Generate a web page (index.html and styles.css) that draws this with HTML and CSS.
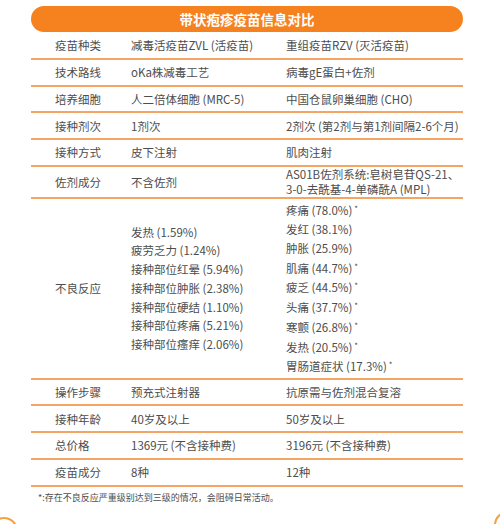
FILE: index.html
```html
<!DOCTYPE html>
<html lang="zh">
<head>
<meta charset="utf-8">
<link rel="stylesheet" href="styles.css">
</head>
<body>
<div class="page">
  <div class="card">
    <div class="title">带状疱疹疫苗信息对比</div>
    <div class="row first">
      <div class="label">疫苗种类</div>
      <div class="cell">减毒活疫苗ZVL (活疫苗)</div>
      <div class="cell">重组疫苗RZV (灭活疫苗)</div>
    </div>
    <div class="row">
      <div class="label">技术路线</div>
      <div class="cell">oKa株减毒工艺</div>
      <div class="cell">病毒gE蛋白+佐剂</div>
    </div>
    <div class="row">
      <div class="label">培养细胞</div>
      <div class="cell">人二倍体细胞 (MRC-5)</div>
      <div class="cell">中国仓鼠卵巢细胞 (CHO)</div>
    </div>
    <div class="row">
      <div class="label">接种剂次</div>
      <div class="cell">1剂次</div>
      <div class="cell">2剂次 (第2剂与第1剂间隔2-6个月)</div>
    </div>
    <div class="row">
      <div class="label">接种方式</div>
      <div class="cell">皮下注射</div>
      <div class="cell">肌肉注射</div>
    </div>
    <div class="row adj">
      <div class="label">佐剂成分</div>
      <div class="cell">不含佐剂</div>
      <div class="cell tight">AS01B佐剂系统:皂树皂苷QS-21、<br>3-0-去酰基-4-单磷酰A (MPL)</div>
    </div>
    <div class="row adverse">
      <div class="label">不良反应</div>
      <div class="cell list">
        <div>发热 (1.59%)</div>
        <div>疲劳乏力 (1.24%)</div>
        <div>接种部位红晕 (5.94%)</div>
        <div>接种部位肿胀 (2.38%)</div>
        <div>接种部位硬结 (1.10%)</div>
        <div>接种部位疼痛 (5.21%)</div>
        <div>接种部位瘙痒 (2.06%)</div>
      </div>
      <div class="cell list">
        <div>疼痛 (78.0%)<span class="star">*</span></div>
        <div>发红 (38.1%)</div>
        <div>肿胀 (25.9%)</div>
        <div>肌痛 (44.7%)<span class="star">*</span></div>
        <div>疲乏 (44.5%)<span class="star">*</span></div>
        <div>头痛 (37.7%)<span class="star">*</span></div>
        <div>寒颤 (26.8%)<span class="star">*</span></div>
        <div>发热 (20.5%)<span class="star">*</span></div>
        <div>胃肠道症状 (17.3%)<span class="star">*</span></div>
      </div>
    </div>
    <div class="row">
      <div class="label">操作步骤</div>
      <div class="cell">预充式注射器</div>
      <div class="cell">抗原需与佐剂混合复溶</div>
    </div>
    <div class="row">
      <div class="label">接种年龄</div>
      <div class="cell">40岁及以上</div>
      <div class="cell">50岁及以上</div>
    </div>
    <div class="row">
      <div class="label">总价格</div>
      <div class="cell">1369元 (不含接种费)</div>
      <div class="cell">3196元 (不含接种费)</div>
    </div>
    <div class="row">
      <div class="label">疫苗成分</div>
      <div class="cell">8种</div>
      <div class="cell">12种</div>
    </div>
    <div class="note">*:存在不良反应严重级别达到三级的情况，会阻碍日常活动。</div>
  </div>
  <div class="deco deco-left"></div>
  <div class="deco deco-right"></div>
</div>
</body>
</html>
```

FILE: styles.css
```css
html, body {
  margin: 0;
  padding: 0;
  background: #ffffff;
}

.page {
  position: relative;
  width: 500px;
  height: 524px;
  overflow: hidden;
  font-family: "Noto Sans CJK SC", "Noto Sans", sans-serif;
  color: #4d4d4d;
}

.card {
  margin-left: 31px;
  padding-top: 6px;
  width: 432px;
}

.title {
  height: 26px;
  border-radius: 13px;
  background: #f6821f;
  color: #ffffff;
  font-size: 13.5px;
  font-weight: 700;
  display: flex;
  align-items: center;
  justify-content: center;
}

.row {
  display: grid;
  grid-template-columns: 100px 155px 1fr;
  align-items: center;
  height: 24.7px;
  border-bottom: 2px solid #f4a564;
  font-size: 11.5px;
  line-height: 16px;
  white-space: nowrap;
}

.row.first {
  height: 26px;
}

.row.adj {
  height: 30px;
}

.row.adverse {
  height: 179px;
}

.label {
  padding-left: 24px;
}

.cell.tight {
  line-height: 15px;
}

.cell.list {
  line-height: 18.75px;
}

.star {
  font-size: 8px;
  vertical-align: 3px;
  margin-left: 2px;
}

.note {
  margin-top: 4px;
  padding-left: 7px;
  font-size: 9px;
  line-height: 14px;
  color: #4d4d4d;
}

.deco {
  position: absolute;
  border: 2px solid #f6a040;
  border-radius: 50%;
}

.deco-left {
  left: -10px;
  top: 517px;
  width: 24px;
  height: 24px;
}

.deco-right {
  left: 494px;
  top: 511px;
  width: 24px;
  height: 24px;
}
```
